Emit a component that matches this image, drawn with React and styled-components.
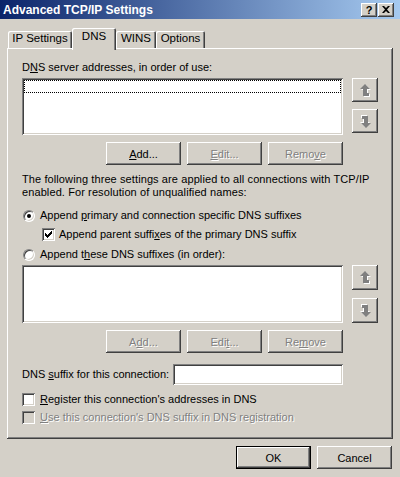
import React from 'react';
import styled, { createGlobalStyle, css } from 'styled-components';

const GlobalStyle = createGlobalStyle`
  html, body {
    margin: 0;
    padding: 0;
    background: #d4d0c8;
  }
  body {
    font-family: "Liberation Sans", Arial, sans-serif;
    font-size: 11px;
    color: #000;
  }
`;

const raised = css`
  box-shadow: inset -1px -1px #404040, inset 1px 1px #fff, inset -2px -2px #808080, inset 2px 2px #d4d0c8;
`;

const sunken = css`
  box-shadow: inset 1px 1px #808080, inset -1px -1px #fff, inset 2px 2px #404040, inset -2px -2px #d4d0c8;
`;

const disabledText = css`
  color: #808080;
  text-shadow: 1px 1px 0 #fff;
`;

const ARROW = '5,0 10,5 7,5 7,9 9,9 9,12 3,12 3,5 0,5';

const ArrowIcon = ({ down }) => (
  <ArrowSvg $down={down} width="11" height="13" viewBox="0 0 11 13">
    <polygon transform="translate(1 1)" fill="#fff" points={ARROW} />
    <polygon fill="#808080" points={ARROW} />
  </ArrowSvg>
);

const CheckMark = () => (
  <svg width="7" height="7" viewBox="0 0 7 7">
    <path fill="#000" d="M0 2h1v3H0zM1 3h1v3H1zM2 4h1v3H2zM3 3h1v3H3zM4 2h1v3H4zM5 1h1v3H5zM6 0h1v3H6z" />
  </svg>
);

const CloseGlyph = () => (
  <svg width="8" height="7" viewBox="0 0 8 7">
    <path fill="#000" d="M0 0h2l2 2 2-2h2L5 3.5 8 7H6L4 5 2 7H0l3-3.5z" />
  </svg>
);

const Mnemonic = ({ children }) => <u>{children}</u>;

const ListWithArrows = ({ height, btnHeight, gap, focus }) => (
  <ListRow>
    <ListBox $h={height}>{focus && <FocusRow />}</ListBox>
    <ArrowStack $gap={gap}>
      <ArrowButton $h={btnHeight}><ArrowIcon /></ArrowButton>
      <ArrowButton $h={btnHeight}><ArrowIcon down /></ArrowButton>
    </ArrowStack>
  </ListRow>
);

const App = () => {
  return (
    <>
      <GlobalStyle />
      <Window>
        <TitleBar>
          <Title>Advanced TCP/IP Settings</Title>
          <CaptionButtons>
            <CaptionButton>?</CaptionButton>
            <CaptionButton><CloseGlyph /></CaptionButton>
          </CaptionButtons>
        </TitleBar>

        <TabStrip>
          <Tab $w={64}>IP Settings</Tab>
          <Tab $w={44} $active>DNS</Tab>
          <Tab $w={40}>WINS</Tab>
          <Tab $w={49}>Options</Tab>
        </TabStrip>

        <Panel>
          <Label>D<Mnemonic>N</Mnemonic>S server addresses, in order of use:</Label>
          <Spacer $h={4} />
          <ListWithArrows height={57} btnHeight={24} gap={7} focus />
          <ButtonRow>
            <Button><Mnemonic>A</Mnemonic>dd...</Button>
            <Button disabled><Mnemonic>E</Mnemonic>dit...</Button>
            <Button disabled>Remo<Mnemonic>v</Mnemonic>e</Button>
          </ButtonRow>

          <Paragraph>
            The following three settings are applied to all connections with TCP/IP
            <br />
            enabled. For resolution of unqualified names:
          </Paragraph>

          <OptionRow $top={10}>
            <Radio $checked />
            <OptionText>Append <Mnemonic>p</Mnemonic>rimary and connection specific DNS suffixes</OptionText>
          </OptionRow>
          <OptionRow $top={6} $indent={20}>
            <CheckBox><CheckMark /></CheckBox>
            <OptionText $gap={4}>Append parent suffi<Mnemonic>x</Mnemonic>es of the primary DNS suffix</OptionText>
          </OptionRow>
          <OptionRow $top={7}>
            <Radio />
            <OptionText>Append t<Mnemonic>h</Mnemonic>ese DNS suffixes (in order):</OptionText>
          </OptionRow>

          <Spacer $h={4} />
          <ListWithArrows height={58} btnHeight={25} gap={8} />
          <ButtonRow>
            <Button disabled>A<Mnemonic>d</Mnemonic>d...</Button>
            <Button disabled>Edi<Mnemonic>t</Mnemonic>...</Button>
            <Button disabled>Re<Mnemonic>m</Mnemonic>ove</Button>
          </ButtonRow>

          <SuffixRow>
            <Label>DNS <Mnemonic>s</Mnemonic>uffix for this connection:</Label>
            <TextBox />
          </SuffixRow>

          <OptionRow $top={8}>
            <CheckBox />
            <OptionText><Mnemonic>R</Mnemonic>egister this connection's addresses in DNS</OptionText>
          </OptionRow>
          <OptionRow $top={5}>
            <CheckBox $disabled />
            <OptionText $disabled><Mnemonic>U</Mnemonic>se this connection's DNS suffix in DNS registration</OptionText>
          </OptionRow>
        </Panel>

        <Footer>
          <Button $default>OK</Button>
          <Button>Cancel</Button>
        </Footer>
      </Window>
    </>
  );
};

export default App;

const Window = styled.div`
  width: 400px;
  height: 477px;
  overflow: hidden;
  background: #d4d0c8;
`;

const TitleBar = styled.div`
  height: 19px;
  display: flex;
  align-items: center;
  justify-content: space-between;
  padding: 0 6px 0 3px;
  background: linear-gradient(to right, #0a246a, #a6caf0);
`;

const Title = styled.div`
  color: #fff;
  font-weight: bold;
  font-size: 12px;
  line-height: 14px;
  white-space: nowrap;
`;

const CaptionButtons = styled.div`
  display: flex;
  gap: 1px;
`;

const CaptionButton = styled.div`
  width: 16px;
  height: 14px;
  display: flex;
  align-items: center;
  justify-content: center;
  background: #d4d0c8;
  font-weight: bold;
  font-size: 11px;
  line-height: 14px;
  ${raised}
`;

const TabStrip = styled.div`
  height: 29px;
  display: flex;
  align-items: flex-end;
  padding-left: 8px;
`;

const Tab = styled.div`
  width: ${(p) => p.$w}px;
  height: ${(p) => (p.$active ? 22 : 17)}px;
  margin-bottom: ${(p) => (p.$active ? -2 : 0)}px;
  box-sizing: border-box;
  padding-top: ${(p) => (p.$active ? 2 : 1)}px;
  text-align: center;
  line-height: 13px;
  font-size: 11.5px;
  background: #d4d0c8;
  border-top-left-radius: 2px;
  border-top-right-radius: 2px;
  box-shadow: inset 1px 1px #fff, inset -1px 0 #404040, inset -2px 0 #808080;
  position: ${(p) => (p.$active ? 'relative' : 'static')};
  z-index: ${(p) => (p.$active ? 1 : 'auto')};
`;

const Panel = styled.div`
  margin-left: 7px;
  width: 386px;
  height: 391px;
  box-sizing: border-box;
  padding: 13px 0 0 15px;
  ${raised}
`;

const Label = styled.div`
  line-height: 13px;
  white-space: nowrap;
`;

const Spacer = styled.div`
  height: ${(p) => p.$h}px;
`;

const ListRow = styled.div`
  display: flex;
  gap: 9px;
`;

const ListBox = styled.div`
  width: 321px;
  height: ${(p) => p.$h}px;
  box-sizing: border-box;
  padding: 2px;
  background: #fff;
  ${sunken}
`;

const FocusRow = styled.div`
  height: 13px;
  box-sizing: border-box;
  border: 1px dotted #000;
`;

const ArrowStack = styled.div`
  display: flex;
  flex-direction: column;
  gap: ${(p) => p.$gap}px;
`;

const ArrowButton = styled.div`
  width: 26px;
  height: ${(p) => p.$h}px;
  display: flex;
  align-items: center;
  justify-content: center;
  background: #d4d0c8;
  ${raised}
`;

const ArrowSvg = styled.svg`
  transform: ${(p) => (p.$down ? 'rotate(180deg)' : 'none')};
`;

const ButtonRow = styled.div`
  width: 321px;
  display: flex;
  justify-content: flex-end;
  gap: 6px;
  margin-top: 7px;
`;

const Button = styled.button`
  width: 75px;
  height: 23px;
  padding: 0;
  border: 0;
  background: #d4d0c8;
  font: inherit;
  font-size: 11px;
  color: #000;
  ${raised}
  ${(p) => p.disabled && disabledText}
  ${(p) =>
    p.$default &&
    css`
      box-shadow: inset 0 0 0 1px #000, inset -2px -2px #404040, inset 2px 2px #fff, inset -3px -3px #808080;
    `}
`;

const Paragraph = styled.div`
  margin-top: 8px;
  line-height: 13px;
  white-space: nowrap;
  letter-spacing: 0.1px;
`;

const OptionRow = styled.div`
  display: flex;
  align-items: center;
  height: 13px;
  margin-top: ${(p) => p.$top}px;
  padding-left: ${(p) => p.$indent || 0}px;
`;

const OptionText = styled.span`
  margin-left: ${(p) => p.$gap || 5}px;
  line-height: 13px;
  white-space: nowrap;
  ${(p) => p.$disabled && disabledText}
`;

const Radio = styled.span`
  flex: none;
  width: 12px;
  height: 12px;
  margin-left: 1px;
  box-sizing: border-box;
  border-radius: 50%;
  border: 1px solid;
  border-color: #808080 #fff #fff #808080;
  background: #fff;
  box-shadow: inset 1px 1px #404040, inset -1px -1px #d4d0c8;
  display: flex;
  align-items: center;
  justify-content: center;

  &::after {
    content: '';
    display: ${(p) => (p.$checked ? 'block' : 'none')};
    width: 4px;
    height: 4px;
    border-radius: 50%;
    background: #000;
  }
`;

const CheckBox = styled.span`
  flex: none;
  width: 13px;
  height: 13px;
  display: flex;
  align-items: center;
  justify-content: center;
  background: ${(p) => (p.$disabled ? '#d4d0c8' : '#fff')};
  ${sunken}
`;

const SuffixRow = styled.div`
  width: 321px;
  margin-top: 11px;
  display: flex;
  align-items: center;
  justify-content: space-between;
`;

const TextBox = styled.div`
  width: 170px;
  height: 21px;
  background: #fff;
  ${sunken}
`;

const Footer = styled.div`
  display: flex;
  justify-content: flex-end;
  gap: 6px;
  margin-top: 7px;
  padding-right: 8px;
`;
